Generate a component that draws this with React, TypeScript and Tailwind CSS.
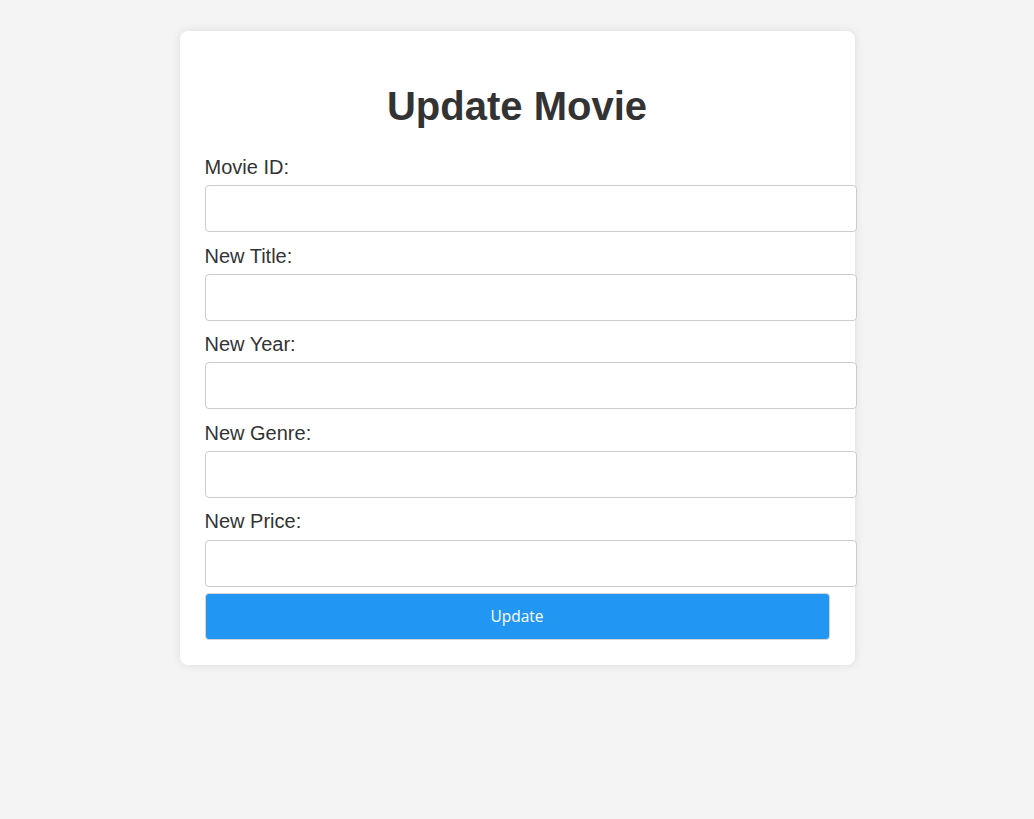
export default function App() {
    const fields = ["Movie ID:", "New Title:", "New Year:", "New Genre:", "New Price:"];

    return (
        <div className="min-h-screen w-full bg-[#f4f4f4] pt-[31px] font-['Liberation_Sans',Arial,sans-serif] text-[#333]">
            <div className="mx-auto w-[675px] rounded-lg bg-white p-[25px] shadow-[0_0_10px_rgba(0,0,0,0.1)]">
                <h1 className="my-[27px] text-center text-[40px] font-bold leading-[46px]">
                    Update Movie
                </h1>

                <form className="flex flex-col" onSubmit={(e) => e.preventDefault()}>
                    {fields.map((label, i) => (
                        <div key={label} className={i < fields.length - 1 ? "mb-[12.3px]" : ""}>
                            <label className="mb-[6.3px] block text-[20px] leading-[23px]">
                                {label}
                            </label>
                            <input
                                type="text"
                                className="block h-[47px] w-[652px] rounded border border-[#ccc] bg-white px-3 text-base outline-none"
                            />
                        </div>
                    ))}

                    <button
                        type="submit"
                        className="mt-[6px] h-[47px] w-[625px] rounded border border-[#d4d4d4] bg-[#2196f3] font-['Open_Sans',sans-serif] text-[15.5px] text-white"
                    >
                        Update
                    </button>
                </form>
            </div>
        </div>
    );
}
